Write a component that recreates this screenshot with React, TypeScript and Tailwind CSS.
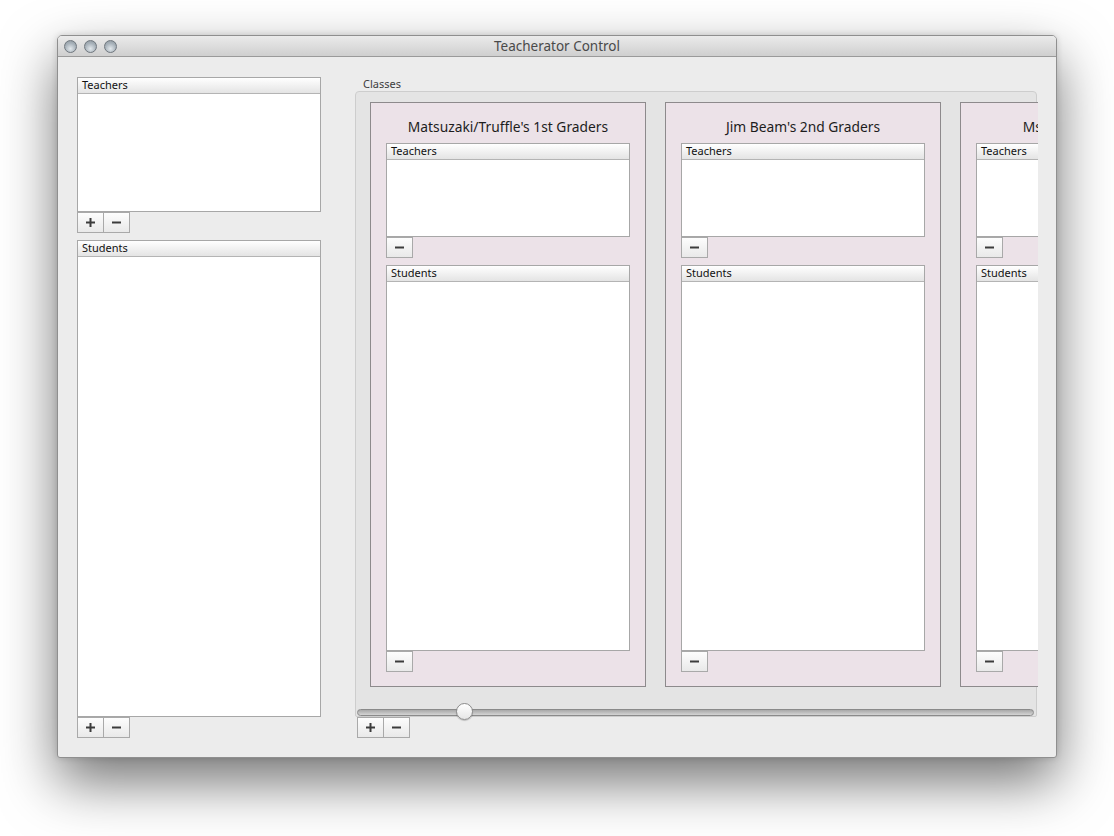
import React from "react";

const FONT = { fontFamily: '"Noto Sans", "DejaVu Sans", sans-serif' };

function Plus() {
  return (
    <svg width="9" height="9" viewBox="0 0 9 9">
      <rect x="3.5" y="0" width="2" height="9" fill="#3c3c3c" />
      <rect x="0" y="3.5" width="9" height="2" fill="#3c3c3c" />
    </svg>
  );
}
function Minus() {
  return (
    <svg width="9" height="9" viewBox="0 0 9 9">
      <rect x="0" y="3.5" width="9" height="2" fill="#3c3c3c" />
    </svg>
  );
}

function Btn({ kind, first }: { kind: "plus" | "minus"; first?: boolean }) {
  return (
    <div
      className={
        "h-[21px] flex items-center justify-center border border-[#a9a9a9] bg-gradient-to-b from-[#fdfdfd] to-[#e9e9e9] " +
        (first ? "w-[27px]" : "w-[26px] border-l-0")
      }
    >
      {kind === "plus" ? <Plus /> : <Minus />}
    </div>
  );
}

function BtnSingle() {
  return (
    <div className="h-[21px] w-[27px] flex items-center justify-center border border-[#a9a9a9] bg-gradient-to-b from-[#fdfdfd] to-[#e9e9e9]">
      <Minus />
    </div>
  );
}

function ListBox({ label, h }: { label: string; h: string }) {
  return (
    <div className={"w-[244px] border border-[#a7a7a7] bg-white flex flex-col " + h}>
      <div className="h-[16px] shrink-0 border-b border-[#b4b4b4] bg-gradient-to-b from-[#ffffff] to-[#e4e4e4] pl-[4px] text-[11px] leading-[14px] text-[#111]">
        {label}
      </div>
    </div>
  );
}

function ClassCard({ title }: { title: string }) {
  return (
    <div className="w-[276px] h-[585px] shrink-0 border border-[#8d8a8c] bg-[#ece2e8] px-[15px] flex flex-col">
      <div className="pt-[15px] h-[40px] text-center text-[13.8px] leading-[17px] text-[#1d1d1d] whitespace-nowrap">
        {title}
      </div>
      <ListBox label="Teachers" h="h-[94px]" />
      <BtnSingle />
      <div className="h-[7px]" />
      <ListBox label="Students" h="h-[386px]" />
      <BtnSingle />
    </div>
  );
}

export default function App() {
  return (
    <div className="min-h-screen bg-white pl-[57px] pt-[35px]" style={FONT}>
      <div className="w-[1000px] h-[723px] rounded-t-[5px] rounded-b-[3px] bg-[#ececec] border border-[#8f8f8f] shadow-[0_24px_55px_rgba(0,0,0,0.55),0_0_6px_rgba(0,0,0,0.15)] flex flex-col overflow-hidden">
        {/* title bar */}
        <div className="h-[21px] shrink-0 relative border-b border-[#9a9a9a] bg-gradient-to-b from-[#ebebeb] to-[#cfcfcf] flex items-center">
          <div className="flex gap-[7px] pl-[6px]">
            {[0, 1, 2].map((i) => (
              <div
                key={i}
                className="w-[13px] h-[13px] rounded-full border border-[#6f777e] bg-[radial-gradient(circle_at_50%_70%,#e2e8ec_0%,#aab4bc_55%,#8a949c_100%)]"
              />
            ))}
          </div>
          <div className="absolute inset-0 flex items-center justify-center text-[13.5px] text-[#4a4a4a]">
            Teacherator Control
          </div>
        </div>
        {/* body */}
        <div className="flex pl-[19px] pt-[20px]">
          {/* left column */}
          <div className="flex flex-col w-[244px]">
            <ListBox label="Teachers" h="h-[135px]" />
            <div className="flex">
              <Btn kind="plus" first />
              <Btn kind="minus" />
            </div>
            <div className="h-[7px]" />
            <ListBox label="Students" h="h-[477px]" />
            <div className="flex">
              <Btn kind="plus" first />
              <Btn kind="minus" />
            </div>
          </div>
          {/* right column */}
          <div className="ml-[34px] flex flex-col w-[682px]">
            <div className="h-[14px] pl-[8px] text-[11px] leading-[14px] text-[#3d3d3d]">Classes</div>
            <div className="h-[626px] rounded-t-[4px] rounded-b-[2px] border border-[#cdcdcd] bg-[#e4e4e4] flex flex-col">
              <div className="overflow-hidden pt-[10px] pl-[14px] mr-[-2px]">
                <div className="flex gap-[19px]">
                  <ClassCard title="Matsuzaki/Truffle's 1st Graders" />
                  <ClassCard title="Jim Beam's 2nd Graders" />
                  <ClassCard title="Ms. Frizzle's 3rd Grader" />
                </div>
              </div>
              <div className="flex-1 flex items-end pl-[1px] pr-[2px] relative">
                <div className="w-full h-[7px] rounded-full border border-[#8a8a8a] bg-gradient-to-b from-[#a8a8a8] to-[#d4d4d4]" />
                <div className="absolute left-[100px] bottom-[-4px] w-[17px] h-[17px] rounded-full border border-[#8c8c8c] bg-gradient-to-b from-[#ffffff] to-[#e6e6e6] shadow-[0_1px_1px_rgba(0,0,0,0.2)]" />
              </div>
            </div>
            <div className="flex pl-[2px]">
              <Btn kind="plus" first />
              <Btn kind="minus" />
            </div>
          </div>
        </div>
      </div>
    </div>
  );
}
